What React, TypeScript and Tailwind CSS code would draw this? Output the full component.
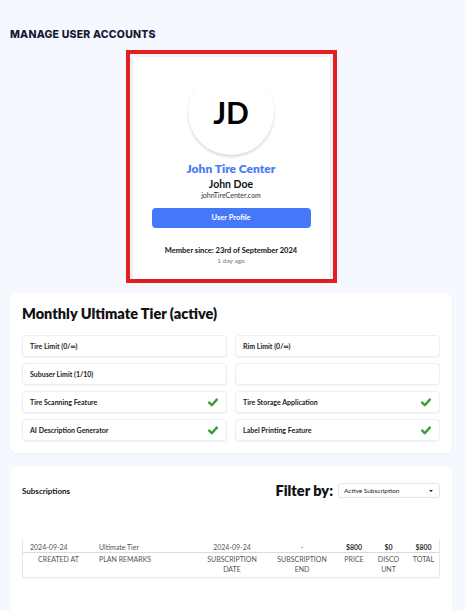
import React from 'react';

const features = [
    { label: 'Tire Limit (0/∞)', check: false },
    { label: 'Rim Limit (0/∞)', check: false },
    { label: 'Subuser Limit (1/10)', check: false },
    { label: '', check: false },
    { label: 'Tire Scanning Feature', check: true },
    { label: 'Tire Storage Application', check: true },
    { label: 'AI Description Generator', check: true },
    { label: 'Label Printing Feature', check: true },
];

const CheckMark = () => (
    <svg width="10" height="9" viewBox="0 0 10 9" className="shrink-0">
        <path d="M1.2 4.6 L3.8 7.2 L8.8 1.6" fill="none" stroke="#3f9b3a" strokeWidth="2.4" strokeLinecap="round" strokeLinejoin="round" />
    </svg>
);

export default function App() {
    return (
        <div className="min-h-[611px] bg-[#f5f8fe] pl-[10px] pr-[13px] pt-[29px] font-['Lato',sans-serif] text-[#111]">
            <h1 className="font-['Inter',sans-serif] text-[10.5px] font-extrabold tracking-[0.02em] text-[#141a33] leading-[12px]">
                MANAGE USER ACCOUNTS
            </h1>

            {/* profile card */}
            <div className="mx-auto mt-[9px] w-[211px] border-4 border-[#e41f1f] bg-[#f1f4fb] p-[3px] pb-0">
                <div className="flex h-[222px] flex-col items-center bg-white pt-[12px] shadow-[0_1px_3px_rgba(0,0,0,0.08)]">
                    <div className="flex h-[86px] w-[86px] items-center justify-center rounded-full bg-white shadow-[0_2px_3px_rgba(0,0,0,0.15)]">
                        <span className="text-[30px] font-bold text-black">JD</span>
                    </div>
                    <p className="mt-[6px] text-[12px] font-extrabold text-[#4a7cf6] leading-[16px]">John Tire Center</p>
                    <p className="text-[10.5px] font-bold leading-[14px]">John Doe</p>
                    <p className="text-[7px] leading-[9px] text-[#333]">johnTireCenter.com</p>
                    <button className="mt-[8px] h-[20px] w-[159px] rounded-[4px] bg-[#4577f8] text-[7.5px] font-bold text-white">
                        User Profile
                    </button>
                    <p className="mt-[18px] text-[7.5px] font-bold leading-[10px]">Member since: 23rd of September 2024</p>
                    <p className="text-[6.5px] leading-[9px] text-[#777]">1 day ago</p>
                </div>
            </div>

            {/* tier */}
            <div className="mt-[10px] rounded-[6px] bg-white px-[12px] pt-[11px] pb-[12px] shadow-[0_1px_3px_rgba(0,0,0,0.05)]">
                <h2 className="text-[14.5px] font-extrabold leading-[20px]">Monthly Ultimate Tier (active)</h2>
                <div className="mt-[11px] grid grid-cols-2 gap-x-[8px] gap-y-[6px]">
                    {features.map((f, i) => (
                        <div key={i} className="flex h-[22px] items-center justify-between rounded-[4px] border border-[#eceef2] bg-white pl-[7px] pr-[8px] shadow-[0_1px_2px_rgba(0,0,0,0.05)]">
                            <span className="text-[7px] font-bold text-[#222]">{f.label}</span>
                            {f.check && <CheckMark />}
                        </div>
                    ))}
                </div>
            </div>

            {/* subscriptions */}
            <div className="mt-[14px] h-[150px] rounded-t-[6px] bg-white px-[12px] pt-[13px]">
                <div className="flex items-center justify-between">
                    <span className="text-[8px] font-bold">Subscriptions</span>
                    <div className="flex items-center gap-[5px]">
                        <span className="text-[14.5px] font-extrabold">Filter by:</span>
                        <div className="flex h-[15px] w-[102px] items-center justify-between rounded-[3px] border border-[#e3e5ea] pl-[5px] pr-[6px]">
                            <span className="text-[6.5px] text-[#222]">Active Subscription</span>
                            <span className="h-0 w-0 border-x-[2px] border-t-[2.5px] border-x-transparent border-t-[#222]" />
                        </div>
                    </div>
                </div>

                <div className="mt-[37px] border-b border-l border-r border-[#e5e7eb] pb-[3px] text-[7px] text-[#555] leading-[10px] shadow-[0_1px_2px_rgba(0,0,0,0.04)]">
                    <div className="grid grid-cols-[71px_103px_70px_70px_34px_35px_35px] border-b border-[#d9dbe0] pt-[3px]">
                        <span className="pl-[7px]">2024-09-24</span>
                        <span className="pl-[5px]">Ultimate Tier</span>
                        <span className="text-center">2024-09-24</span>
                        <span className="text-center">-</span>
                        <span className="text-center font-bold text-[#333]">$800</span>
                        <span className="text-center font-bold text-[#333]">$0</span>
                        <span className="text-center font-bold text-[#333]">$800</span>
                    </div>
                    <div className="grid grid-cols-[71px_103px_70px_70px_34px_35px_35px] pt-[1px]">
                        <span className="text-center">CREATED AT</span>
                        <span className="pl-[5px]">PLAN REMARKS</span>
                        <span className="text-center">SUBSCRIPTION<br />DATE</span>
                        <span className="text-center">SUBSCRIPTION<br />END</span>
                        <span className="text-center">PRICE</span>
                        <span className="text-center">DISCO<br />UNT</span>
                        <span className="text-center">TOTAL</span>
                    </div>
                </div>
            </div>
        </div>
    );
}
